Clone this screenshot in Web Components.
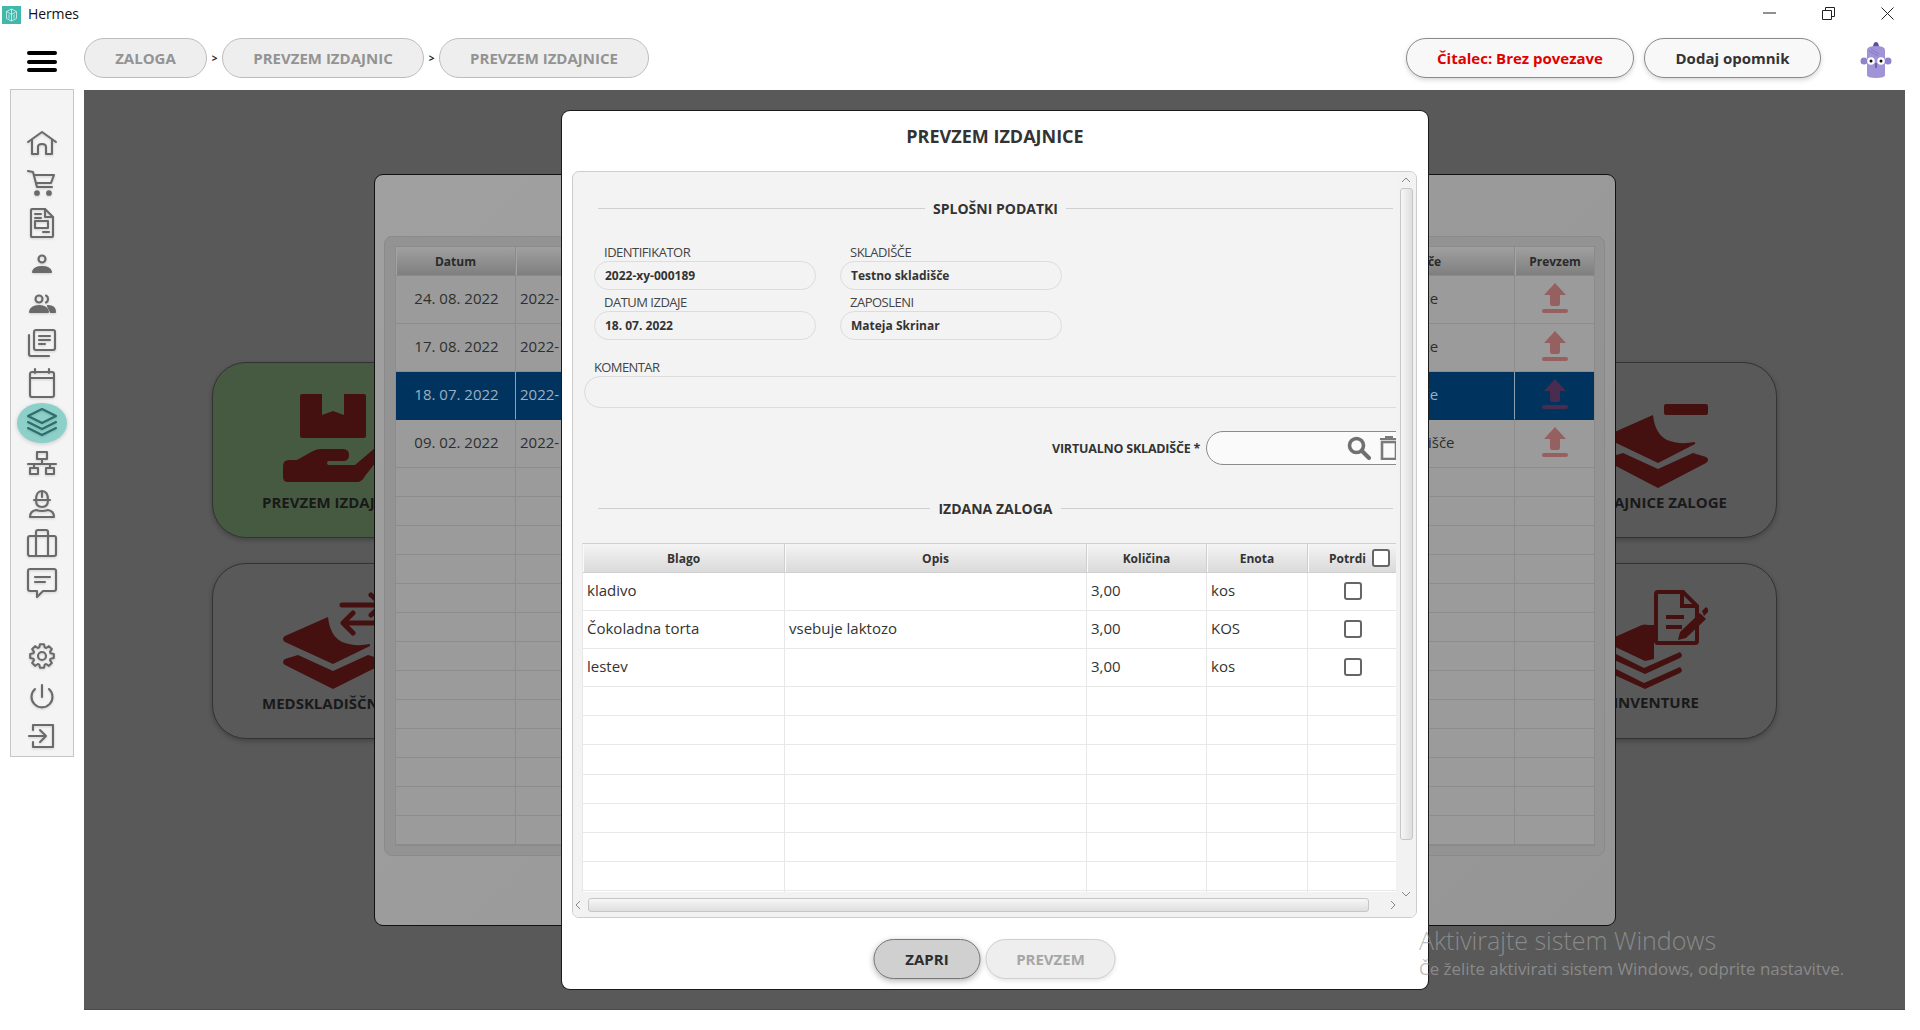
<!DOCTYPE html>
<html lang="sl">
<head>
<meta charset="utf-8">
<title>Hermes</title>
<style>
html,body{margin:0;padding:0;width:1920px;height:1030px;overflow:hidden;background:#fff;font-family:"Open Sans","Liberation Sans",sans-serif;color:#333}
</style>
</head>
<body>
<app-shell></app-shell>
<script>
function gearPath(){
  const cx=16,cy=16,n=8;let d='';
  for(let i=0;i<n;i++){
    const a=i*2*Math.PI/n;
    const pts=[[9,-.3],[12,-.17],[12,.17],[9,.3]];
    pts.forEach((p,j)=>{
      const x=cx+p[0]*Math.cos(a+p[1]),y=cy+p[0]*Math.sin(a+p[1]);
      d+=(i===0&&j===0?'M':'L')+x.toFixed(1)+' '+y.toFixed(1);
    });
  }
  return d+'Z';
}
const ICONS={
 home:'<path d="M2 15L16 5l14 10"/><path d="M6 13v14h6v-7q0-3 4-3t4 3v7h6V13"/>',
 cart:'<path d="M2 4l5 1 4 15h15"/><path d="M8.500 8H28l-3 8H11"/><circle cx="11" cy="26" r="1.800" fill="currentColor"/><circle cx="23" cy="26" r="1.800" fill="currentColor"/>',
 doc:'<path d="M6 2h13l8 8v19q0 1-1 1H6q-1 0-1-1V3q0-1 1-1z"/><path d="M19 2v8h8M9 7h6M9 11h6M17 25h6"/><rect x="9" y="14" width="13" height="7"/>',
 person:'<circle cx="16" cy="12" r="3.500"/><path d="M7 25q1-5 9-5t9 5z" fill="currentColor"/>',
 people:'<circle cx="13" cy="12" r="3.500"/><path d="M20 8.500a4 4 0 0 1 0 7"/><path d="M4 25q1-6 9-6t9 6z" fill="currentColor"/><path d="M22 19q7 0 7 6h-4z" fill="currentColor"/>',
 list:'<rect x="8" y="3" width="21" height="20" rx="2"/><path d="M13 9h11M13 13h11M13 17h6M3 8v19q0 2 2 2h18"/>',
 calendar:'<rect x="4" y="5" width="24" height="25" rx="2"/><path d="M4 11h24M9 2v4M23 2v4"/>',
 layers:'<path d="M16 2l14 7-14 7L2 9z"/><path d="M2 15l14 7 14-7M2 21l14 7 14-7"/>',
 network:'<rect x="11" y="5" width="10" height="7"/><path d="M16 12v5M2 17h28M8 17v4M24 17v4"/><rect x="4" y="21" width="8" height="6"/><rect x="20" y="21" width="8" height="6"/>',
 worker:'<path d="M10 13q0-9 6-9t6 9M8 13h16M16 4v6M10 13q0 7 6 7t6-7"/><path d="M4 30q0-6 6-7 6 2 12 0 6 1 6 7z"/>',
 briefcase:'<rect x="2" y="9" width="28" height="20" rx="2"/><path d="M10 9V5q0-2 2-2h8q2 0 2 2v4M10 9v20M22 9v20"/>',
 chat:'<path d="M4 2h24q2 0 2 2v18q0 2-2 2H17l-6 6v-6H4q-2 0-2-2V4q0-2 2-2z"/><path d="M9 10h15M9 15h10"/>',
 gear:'<path d="'+gearPath()+'"/><circle cx="16" cy="16" r="4"/>',
 power:'<path d="M16 5v12M9 9a10.500 10.500 0 1 0 14 0"/>',
 exit:'<path d="M7 10V5h20v22H7v-5"/><path d="M3 16h16M14 10l6 6-6 6"/>'
};
const TILE_ICONS={
 receive:'<svg width="130" height="88" viewBox="0 0 130 88"><path fill="currentColor" d="M19 0h20v21l11-4 11 4V0h20q2 0 2 2v40q0 2-2 2H19q-2 0-2-2V2q0-2 2-2z"/><path fill="currentColor" d="M0 72q0-6 6-6h8l16-9q4-2 8-2h22q6 0 6 6t-6 6H46q-2 0-2 2t2 2h26l20-17 6 0 6 0-22 28q-3 6-8 6H5q-5 0-5-5z"/></svg>',
 transfer:'<svg width="130" height="97" viewBox="0 0 130 97"><path fill="currentColor" d="M0 47q0-2 2-3l43-19q2 19 14 25 12 5 28 2v2l-37 18L2 50q-2-1-2-3z"/><path fill="currentColor" d="M0 70q0-2 2-3l13-4 35 16 35-16 13 4q2 1 2 3t-2 3L50 97 2 73q-2-1-2-3z"/><path fill="none" stroke="currentColor" stroke-width="5" stroke-linecap="round" stroke-linejoin="round" d="M59 13h40M88 3l11 10-11 10M62 31h56M70 21L60 31l10 10"/></svg>',
 issue:'<svg width="100" height="84" viewBox="0 0 100 84"><path fill="currentColor" d="M0 33q0-2 2-3l43-19q2 19 14 25 12 5 28 2v2L50 59 2 36q-2-1-2-3z"/><path fill="currentColor" d="M0 56q0-2 2-3l13-4 35 16 35-16 13 4q2 1 2 3t-2 3L50 84 2 59q-2-1-2-3z"/><rect x="56" y="0" width="44" height="11" rx="2" fill="currentColor"/></svg>',
 inventory:'<svg width="100" height="100" viewBox="0 0 100 100"><path fill="currentColor" d="M0 50l34-15q3-1 6 0h6v34l-9 2-36-17q-1-2-1-4z"/><path fill="currentColor" d="M4 62l32 16 36-16 2 3q0 2-2 3L37 84 2 68z"/><path fill="currentColor" d="M4 77l32 16 36-16 2 3q0 2-2 3L37 99 2 83z"/><path fill="none" stroke="currentColor" stroke-width="4" d="M50 2h25l14 14v35q0 2-2 2H50q-2 0-2-2V4q0-2 2-2z"/><path fill="none" stroke="currentColor" stroke-width="4" d="M74 3v13h14"/><path fill="none" stroke="currentColor" stroke-width="4" d="M58 27h18M58 37h16"/><path fill="currentColor" d="M72 42l20-19 6 6-20 19-8 2zM94 21l4-4 2 2v3l-4 4z"/></svg>'
};
class HTMLBase extends HTMLElement{
  render(html){ if(!this.shadowRoot) this.attachShadow({mode:'open'}); this.shadowRoot.innerHTML=html; }
}
class NavIcon extends HTMLBase{
  connectedCallback(){
    const n=this.getAttribute('name'),active=this.hasAttribute('active');
    this.render(`<style>
      :host{display:flex;width:64px;height:40px;align-items:center;justify-content:center;position:relative;color:${active?'#2d6d6a':'#6a6a6a'}}
      .bg{position:absolute;left:7px;top:0;width:50px;height:40px;border-radius:50%;background:#8dd0ca;box-shadow:0 1px 4px rgba(0,0,0,.18)}
      svg{position:relative;width:32px;height:32px;fill:none;stroke:currentColor;stroke-width:2.100;stroke-linejoin:round;stroke-linecap:round;filter:drop-shadow(0 1px 1px rgba(0,0,0,.15))}
    </style>${active?'<span class="bg"></span>':''}<svg viewBox="0 0 32 32">${ICONS[n]}</svg>`);
  }
}
class SideNav extends HTMLBase{
  connectedCallback(){
    const top=['home','cart','doc','person','people','list','calendar','layers','network','worker','briefcase','chat'];
    const bot=['gear','power','exit'];
    const i=(n)=>`<nav-icon name="${n}" ${n==='layers'?'active':''}></nav-icon>`;
    this.render(`<style>
      :host{display:flex;flex-direction:column;box-sizing:border-box;width:64px;height:668px;background:#f4f4f4;border:1px solid #c6c6c6;padding-top:33px;align-items:center;margin-top:-1px}
      .gap{height:33px;flex:none}
      nav-icon{flex:none}
    </style>${top.map(i).join('')}<div class="gap"></div>${bot.map(i).join('')}`);
  }
}
class WinTitlebar extends HTMLBase{
  connectedCallback(){
    this.render(`<style>
      :host{display:flex;align-items:center;height:30px;box-sizing:border-box;padding-left:2px;font:14px/20px "Open Sans",sans-serif;color:#111;position:relative}
      .logo{width:19px;height:18px;margin-right:7px;flex:none}
      .title{letter-spacing:-.1px;margin-top:-2px}
      .ctrl{margin-left:auto;display:flex;height:30px;margin-right:3px}
      .ctrl span{display:flex;width:59px;height:26px;align-items:center;justify-content:center}
      svg{display:block}
    </style>
    <svg class="logo" viewBox="0 0 19 18"><rect width="19" height="18" fill="#42b8ad"/><path d="M9.500 3L14.500 5.500v7L9.500 15 4.500 12.500v-7zM9.500 3V15M7 8.500v4M12 8.500v4M4.500 5.500l5 3 5-3" fill="none" stroke="#d8f2ef" stroke-width=".8"/></svg>
    <span class="title">Hermes</span>
    <div class="ctrl">
      <span><svg width="13" height="2"><path d="M0 1h13" stroke="#222"/></svg></span>
      <span><svg width="13" height="13"><path d="M.5 3.500h9v9h-9zM3.500 3V.5h9v9H10" fill="none" stroke="#222"/></svg></span>
      <span><svg width="13" height="13"><path d="M.5.5l12 12M12.500.5l-12 12" fill="none" stroke="#222"/></svg></span>
    </div>`);
  }
}
class PillButton extends HTMLBase{
  connectedCallback(){
    const v=this.getAttribute('variant')||'crumb';
    const st={
     crumb:'background:#eeeeee;border:1px solid #bdbdbd;color:#939393',
     action:'background:#f8f8f8;border:1px solid #8a8a8a;color:#333;box-shadow:0 2px 5px rgba(0,0,0,.16)',
     danger:'background:#f8f8f8;border:1px solid #8a8a8a;color:#e00000;box-shadow:0 2px 5px rgba(0,0,0,.16)',
     pressed:'background:#d0d0d0;border:1px solid #777;color:#2d2d2d;box-shadow:0 2px 6px rgba(0,0,0,.3)',
     disabled:'background:#eeeeee;border:1px solid #cfcfcf;color:#a6a6a6;box-shadow:0 2px 4px rgba(0,0,0,.1)'
    }[v];
    this.render(`<style>
      :host{display:inline-flex;box-sizing:border-box;height:40px;border-radius:20px;align-items:center;justify-content:center;font:700 15px "Open Sans",sans-serif;flex:none;${st};width:${this.getAttribute('w')}px}
    </style><slot></slot>`);
  }
}
class AppToolbar extends HTMLBase{
  connectedCallback(){
    this.render(`<style>
      :host{display:flex;align-items:center;height:60px;box-sizing:border-box;padding:0 0 4px 27px;font-family:"Open Sans",sans-serif}
      .burger{width:30px;height:21px;display:flex;flex-direction:column;justify-content:space-between;margin-right:27px;margin-top:7px;flex:none}
      .burger i{display:block;height:4px;border-radius:2px;background:#000}
      .sep{width:15px;text-align:center;font:700 10px "Open Sans",sans-serif;color:#222}
      .right{margin-left:auto;display:flex;gap:10px;align-items:center}
      .mascot{margin-left:29px;margin-right:28px;width:32px;height:37px;display:block;margin-top:2px}
    </style>
    <div class="burger"><i></i><i></i><i></i></div>
    <pill-button w="123">ZALOGA</pill-button><span class="sep">&gt;</span>
    <pill-button w="202">PREVZEM IZDAJNIC</pill-button><span class="sep">&gt;</span>
    <pill-button w="210">PREVZEM IZDAJNICE</pill-button>
    <div class="right">
      <pill-button w="228" variant="danger">Čitalec: Brez povezave</pill-button>
      <pill-button w="177" variant="action">Dodaj opomnik</pill-button>
      <svg class="mascot" viewBox="0 0 32 37">
        <path d="M12 8L14 2Q16 0 18 2L20 8z" fill="#5d4f9e"/>
        <path d="M7 9q0-4 9-4t9 4v25q0 3-9 3t-9-3z" fill="#a093d8"/>
        <path d="M9 10l9 5M11 8l8 5" stroke="#8072bd" stroke-width=".8"/>
        <circle cx="4" cy="20" r="3.500" fill="#8f82cc"/><circle cx="28" cy="20" r="3.500" fill="#8f82cc"/>
        <circle cx="11" cy="20" r="3.800" fill="#fff"/><circle cx="21" cy="20" r="3.800" fill="#fff"/>
        <circle cx="11" cy="20" r="1.500" fill="#111"/><circle cx="21" cy="20" r="1.500" fill="#111"/>
        <path d="M16 22v5" stroke="#3a3166" stroke-width="1"/>
      </svg>
    </div>`);
  }
}
class CheckBox extends HTMLBase{
  connectedCallback(){
    this.render(`<style>:host{display:inline-block;box-sizing:border-box;width:18px;height:18px;border:2px solid #666;border-radius:3px;background:#fff}</style>`);
  }
}
class UploadIcon extends HTMLBase{
  connectedCallback(){
    this.render(`<style>:host{display:block;width:26px;height:30px;color:var(--icon,#976060)}svg{display:block}</style>
    <svg width="26" height="30" viewBox="0 0 26 30"><path fill="currentColor" d="M13 0l11 12h-6v9q0 2-2 2h-6q-2 0-2-2v-9H2z"/><rect y="26" width="26" height="4" rx="2" fill="currentColor"/></svg>`);
  }
}
class DataGrid extends HTMLBase{
  connectedCallback(){
    if(!this.getAttribute('config')) return;
    const c=JSON.parse(this.getAttribute('config'));
    const hdr=c.head.map(h=>`<div class="h">${h}</div>`).join('');
    let body='';
    c.rows.forEach(r=>{
      r.cells.forEach((t,i)=>{
        const cl=['c'];
        if(r.sel) cl.push('sel');
        if((c.center||[]).includes(i)) cl.push('ctr');
        body+=`<div class="${cl.join(' ')}" style="height:${r.h}px">${t}</div>`;
      });
    });
    this.render(`<style>
      :host{display:block}
      .g{display:grid;grid-template-columns:${c.cols.map(x=>x+'px').join(' ')};background:var(--bg);border-left:1px solid var(--line);border-top:1px solid var(--hline);}
      .h{height:${c.headH}px;display:flex;align-items:center;justify-content:center;box-sizing:border-box;font:700 12px "Open Sans",sans-serif;color:var(--htext);background:linear-gradient(var(--h1),var(--h2));border-right:1px solid var(--hline);border-bottom:1px solid var(--hline);box-shadow:inset 1px 0 0 var(--hlight);letter-spacing:var(--hls,0)}
      .c{box-sizing:border-box;display:flex;align-items:center;padding-left:4px;font:15px "Open Sans",sans-serif;color:var(--text);border-right:1px solid var(--line);border-bottom:1px solid var(--line);white-space:nowrap;overflow:hidden;padding-bottom:4px}
      .ctr{justify-content:center;padding-left:0}
      .sel{background:#00345e;color:#9db0c2;border-color:#00345e;border-right-color:#8aa0b4;--icon:#4a2c50}
    </style><div class="g">${hdr}${body}</div>`);
  }
}
class TileCard extends HTMLBase{
  connectedCallback(){
    const green=this.hasAttribute('green');
    const icon=this.getAttribute('icon');
    const ox=this.getAttribute('ox')||70, oy=this.getAttribute('oy')||31;
    const pl=this.getAttribute('pl'), pr=this.getAttribute('pr');
    const align=pl?`text-align:left;padding-left:${pl}px;`:`text-align:right;padding-right:${pr}px;`;
    this.render(`<style>
      :host{display:block;box-sizing:border-box;height:176px;border-radius:34px;border:1px solid #333;background:${green?'#465a42':'#595959'};box-shadow:0 2px 5px rgba(0,0,0,.25);position:relative;color:#451010;overflow:hidden}
      .i{position:absolute;left:${ox}px;top:${oy}px;line-height:0}
      .l{position:absolute;left:0;right:0;top:${this.getAttribute('ly')||127}px;${align}font:700 15px/24px "Open Sans",sans-serif;color:#191919;white-space:nowrap}
    </style><div class="i">${TILE_ICONS[icon]}</div><div class="l"><slot></slot></div>`);
  }
}
const DIM={vars:'--bg:#9b9b9b;--line:#8c8c8c;--hline:#8a8a8a;--hlight:#a4a4a4;--h1:#a0a0a0;--h2:#7f7f7f;--text:#2e2e2e;--htext:#2a2a2a;'};
class BackPanel extends HTMLBase{
  connectedCallback(){
    const up='<upload-icon></upload-icon>';
    const d=(t)=>`<span style="margin-left:2px">${t}</span>`;
    const s=(t)=>`<span style="margin-left:7px">${t}</span>`;
    const rows=[
      [d('24. 08. 2022'),'2022-',s('Testno skladišče'),up],
      [d('17. 08. 2022'),'2022-',s('Testno skladišče'),up],
      [d('18. 07. 2022'),'2022-',s('Testno skladišče'),up],
      [d('09. 02. 2022'),'2022-',s('Virtualno skladišče'),up]
    ].map((r,i)=>({h:48,cells:r,sel:i===2}));
    for(let i=0;i<13;i++) rows.push({h:29,cells:['','','','']});
    const cfg={cols:[120,797,202,81],headH:29,head:['Datum','','Skladišče','Prevzem'],rows,center:[0,3]};
    this.render(`<style>
      :host{display:block;box-sizing:border-box;height:100%;background:linear-gradient(135deg,#a0a0a0,#959595);border:1px solid #111;border-radius:9px;padding:61px 10px 0 9px;overflow:hidden}
      .sub{box-sizing:border-box;border:1px solid #8a8a8a;border-radius:8px;height:620px;padding:9px 9px 0 10px;background:#939393;overflow:hidden}
      .in{background:#9b9b9b;height:599px;overflow:hidden;border-right:1px solid #8a8a8a;border-bottom:1px solid #8a8a8a}
      data-grid{${DIM.vars}--hls:0}
    </style><div class="sub"><div class="in"><data-grid id="g"></data-grid></div></div>`);
    const g=this.shadowRoot.getElementById('g');
    g.setAttribute('config',JSON.stringify(cfg)); g.connectedCallback();
  }
}
class SectionHead extends HTMLBase{
  connectedCallback(){
    this.render(`<style>
      :host{display:flex;align-items:center;height:20px;gap:8px;padding:0 3px 0 25px;font:700 14px "Open Sans",sans-serif;color:#333;white-space:nowrap}
      i{flex:1;height:1px;background:#cfcfcf;display:block}
    </style><i></i><slot></slot><i></i>`);
  }
}
class FormField extends HTMLBase{
  connectedCallback(){
    this.render(`<style>
      :host{display:block}
      .l{font:13px/18px "Open Sans",sans-serif;color:#444;padding-left:10px;letter-spacing:-.5px;height:18px}
      .v{box-sizing:border-box;height:29px;border:1px solid #dcdcdc;border-radius:15px;display:flex;align-items:center;padding-left:10px;font:700 12px "Open Sans",sans-serif;color:#333}
    </style><div class="l">${this.getAttribute('label')}</div><div class="v"><slot></slot></div>`);
  }
}
class IssueForm extends HTMLBase{
  connectedCallback(){
    const cb='<check-box style="margin-top:2px"></check-box>';
    const rows=[
      {h:38,cells:['kladivo','','3,00','kos',cb]},
      {h:38,cells:['Čokoladna torta','vsebuje laktozo','3,00','KOS',cb]},
      {h:38,cells:['lestev','','3,00','kos',cb]}
    ];
    [29,29,30,29,29,29,29,29].forEach(h=>rows.push({h,cells:['','','','','']}));
    const cfg={cols:[202,302,120,101,90],headH:29,center:[4],rows,
      head:['Blago','Opis','Količina','Enota','<span style="display:flex;align-items:center;gap:6px;margin-left:14px">Potrdi<check-box></check-box></span>']};
    this.render(`<style>
      :host{display:block;height:745px;overflow:hidden;box-sizing:border-box;padding-top:26px;width:100%}
      .form{display:grid;grid-template-columns:222px 222px;column-gap:24px;row-gap:3px;padding:25px 0 0 21px}
      .kl{font:13px/18px "Open Sans",sans-serif;color:#444;margin:18px 0 0 21px;letter-spacing:-.6px}
      .k{box-sizing:border-box;height:32px;margin-left:11px;width:900px;border:1px solid #dcdcdc;border-radius:16px}
      .v{display:flex;align-items:center;height:34px;margin-top:23px;gap:6px;margin-left:479px}
      .v label{font:700 12.500px "Open Sans",sans-serif;color:#333;white-space:nowrap;letter-spacing:-.2px}
      .inp{position:relative;flex:none;box-sizing:border-box;width:260px;height:34px;border:1px solid #8a8a8a;border-radius:17px;background:#fafafa;display:flex;align-items:center;padding-left:140px;gap:8px}
      section-head.s2{margin-top:33px}
      .tw{margin:25px 0 0 9px}
      svg{display:block;flex:none}
      data-grid{--bg:#fff;--line:#e8e8e8;--hline:#cfcfcf;--hlight:#fafafa;--h1:#f4f4f4;--h2:#dadada;--text:#333;--htext:#333}
    </style>
    <section-head>SPLOŠNI PODATKI</section-head>
    <div class="form">
      <form-field label="IDENTIFIKATOR">2022-xy-000189</form-field>
      <form-field label="SKLADIŠČE">Testno skladišče</form-field>
      <form-field label="DATUM IZDAJE">18. 07. 2022</form-field>
      <form-field label="ZAPOSLENI">Mateja Skrinar</form-field>
    </div>
    <div class="kl">KOMENTAR</div>
    <div class="k"></div>
    <div class="v"><label>VIRTUALNO SKLADIŠČE *</label>
      <div class="inp">
        <svg width="24" height="24" viewBox="0 0 24 24"><circle cx="9.500" cy="9.500" r="7" fill="none" stroke="#707070" stroke-width="3.600"/><path d="M15 15l7 7" stroke="#707070" stroke-width="4" stroke-linecap="round"/></svg>
        <svg width="20" height="24" viewBox="0 0 20 24"><path d="M1 3h18M6 1h8" stroke="#7a7a7a" stroke-width="2.200" fill="none"/><rect x="3" y="6" width="14" height="17" fill="none" stroke="#7a7a7a" stroke-width="2.600"/></svg>
      </div>
    </div>
    <section-head class="s2">IZDANA ZALOGA</section-head>
    <div class="tw"><data-grid id="t"></data-grid></div>`);
    const t=this.shadowRoot.getElementById('t');
    t.setAttribute('config',JSON.stringify(cfg)); t.connectedCallback();
  }
}
class ScrollBar extends HTMLBase{
  connectedCallback(){
    const v=this.getAttribute('dir')==='v';
    const arrow=(p)=>`<svg width="10" height="10" viewBox="0 0 10 10"><path d="${p}" fill="none" stroke="#888" stroke-width="1"/></svg>`;
    this.render(`<style>
      :host{display:flex;${v?'flex-direction:column;width:20px;align-items:center;':'height:25px;align-items:center;'}background:#f2f2f2;box-sizing:border-box}
      .a{display:flex;align-items:center;justify-content:${v?'center':'flex-end'};flex:none;${v?'height:16px;width:20px':'width:16px;height:25px'}}
      .t{box-sizing:border-box;border:1px solid #c6c6c6;border-radius:3px;background:linear-gradient(${v?'90deg':'180deg'},#f6f6f6,#dedede)}
      .tv{width:13px;height:652px}
      .th{height:14px;width:781px}
      .tr{flex:1}
      svg{display:block}
    </style>
    ${v?`<div class="a">${arrow('M1 7l4-4 4 4')}</div><div class="t tv"></div><div class="tr"></div><div class="a" style="margin-bottom:15px">${arrow('M1 3l4 4 4-4')}</div>`
       :`<div class="a" style="justify-content:flex-start;width:15px">${arrow('M7 1L3 5l4 4')}</div><div class="t th"></div><div class="tr"></div><div class="a">${arrow('M5 1l4 4-4 4')}</div>`}`);
  }
}
class ModalDialog extends HTMLBase{
  connectedCallback(){
    this.render(`<style>
      :host{display:flex;flex-direction:column;box-sizing:border-box;height:100%;background:#fff;border-radius:8px;box-shadow:0 0 0 1px #1a1a1a}
      h1{margin:0;height:60px;flex:none;display:flex;align-items:center;justify-content:center;font:700 18px "Open Sans",sans-serif;color:#333;padding-bottom:10px;box-sizing:border-box}
      .p{flex:none;box-sizing:border-box;margin:0 11px 0 10px;height:747px;border:1px solid #cdcdcd;border-radius:7px;background:#f3f3f3;display:grid;grid-template-columns:1fr 20px;grid-template-rows:720px 25px;overflow:hidden}
      .fill{min-width:0;height:720px;overflow:hidden}
      scroll-bar[dir=v]{grid-column:2;grid-row:1/3}
      scroll-bar[dir=h]{grid-column:1;grid-row:2}
      .f{display:flex;justify-content:center;gap:5px;padding-top:21px}
      .f pill-button{transform:translateX(-.5px)}
    </style>
    <h1>PREVZEM IZDAJNICE</h1>
    <div class="p"><div class="fill"><issue-form></issue-form></div><scroll-bar dir="v"></scroll-bar><scroll-bar dir="h"></scroll-bar></div>
    <div class="f"><pill-button w="107" variant="pressed">ZAPRI</pill-button><pill-button w="130" variant="disabled">PREVZEM</pill-button></div>`);
  }
}
class AppShell extends HTMLBase{
  connectedCallback(){
    this.render(`<style>
      :host{display:block;width:1920px;height:1030px;position:relative;overflow:hidden}
      .main{display:flex;padding-left:10px;gap:10px}
      .work{position:relative;width:1821px;height:920px;background:#595959;box-shadow:inset 0 -1px 0 #4a4a4a}
      .tiles{display:grid;grid-template-columns:270px 270px;justify-content:space-between;grid-template-rows:176px 176px;row-gap:25px;padding:272px 128px 0}
      back-panel{position:absolute;left:290px;top:84px;width:1242px;height:752px}
      modal-dialog{position:absolute;left:478px;top:21px;width:866px;height:878px}
      .wm{position:absolute;left:1335px;top:832px;color:rgba(160,160,160,.7);font-family:"Open Sans",sans-serif;white-space:nowrap;pointer-events:none}
      .wm .a{font-size:25px;line-height:36px;font-weight:300}
      .wm .b{font-size:16.900px;line-height:22px}
    </style>
    <win-titlebar></win-titlebar>
    <app-toolbar></app-toolbar>
    <div class="main">
      <side-nav></side-nav>
      <div class="work">
        <div class="tiles">
          <tile-card green icon="receive" pl="49">PREVZEM IZDAJNICE</tile-card>
          <tile-card icon="issue" ox="100" oy="41" pr="49">IZDAJNICE ZALOGE</tile-card>
          <tile-card icon="transfer" oy="28" pl="49">MEDSKLADIŠČNICE</tile-card>
          <tile-card icon="inventory" ox="100" oy="26" pr="77" ly="126">INVENTURE</tile-card>
        </div>
        <back-panel></back-panel>
        <modal-dialog></modal-dialog>
        <div class="wm"><div class="a">Aktivirajte sistem Windows</div><div class="b">Če želite aktivirati sistem Windows, odprite nastavitve.</div></div>
      </div>
    </div>`);
  }
}
customElements.define('nav-icon',NavIcon);
customElements.define('side-nav',SideNav);
customElements.define('win-titlebar',WinTitlebar);
customElements.define('pill-button',PillButton);
customElements.define('app-toolbar',AppToolbar);
customElements.define('check-box',CheckBox);
customElements.define('upload-icon',UploadIcon);
customElements.define('data-grid',DataGrid);
customElements.define('tile-card',TileCard);
customElements.define('back-panel',BackPanel);
customElements.define('section-head',SectionHead);
customElements.define('form-field',FormField);
customElements.define('issue-form',IssueForm);
customElements.define('scroll-bar',ScrollBar);
customElements.define('modal-dialog',ModalDialog);
customElements.define('app-shell',AppShell);
</script>
</body>
</html>
